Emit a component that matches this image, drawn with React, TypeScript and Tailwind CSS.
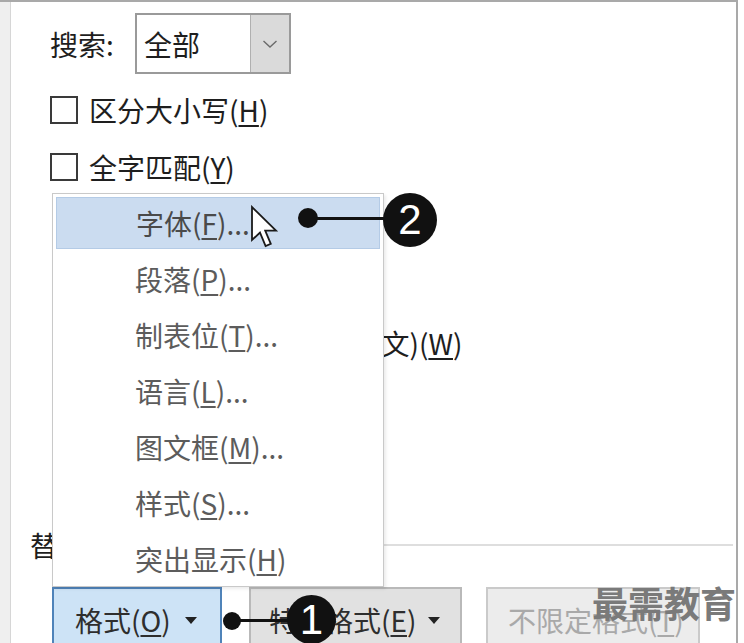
import React from "react";

const U = ({ c }: { c: string }) => <span className="underline underline-offset-[3px] decoration-[1.5px]">{c}</span>;

function Check({ label, k }: { label: string; k: string }) {
  return (
    <div className="flex items-center">
      <div className="w-[28px] h-[28px] border-2 border-[#3a3a3a] bg-white shrink-0" />
      <span className="ml-[11px] text-[#1e1e1e] whitespace-nowrap">
        {label}(<U c={k} />)
      </span>
    </div>
  );
}

function MenuItem({ label, k, dots = true, active = false }: { label: string; k: string; dots?: boolean; active?: boolean }) {
  return (
    <div className="h-[56px] px-[3px] py-[2px]">
      <div
        className={
          "h-full flex items-center pl-[79px] whitespace-nowrap " +
          (active ? "bg-[#cbdcf0] border border-[#b4cbe6] text-[#4a4a4a]" : "text-[#5c5c5c]")
        }
      >
        {label}(<U c={k} />){dots ? "..." : ""}
      </div>
    </div>
  );
}

export default function App() {
  return (
    <div
      className="relative w-[744px] h-[643px] overflow-hidden bg-white text-[28px] leading-none"
      style={{ fontFamily: '"Noto Sans CJK SC", "Microsoft YaHei", sans-serif' }}
    >
      <div className="w-[738px] h-[700px] flex border-t-2 border-r-2 border-[#a9a9a9]">
        <div className="w-[11px] bg-[#efefef] border-r border-[#d6d6d6] shrink-0" />
        <div className="flex-1 flex flex-col pl-[19px]">
          {/* search row */}
          <div className="flex items-center pl-[20px] pt-[11px] h-[72px]">
            <span className="text-[#1e1e1e] w-[85px]">搜索:</span>
            <div className="w-[156px] h-[61px] border-2 border-[#9a9a9a] flex">
              <div className="flex-1 flex items-center pl-[7px] text-[#1e1e1e]">全部</div>
              <div className="w-[39px] bg-[#dadada] border-l border-[#b0b0b0] flex items-center justify-center">
                <svg width="16" height="10" viewBox="0 0 16 10" fill="none">
                  <path d="M1.5 2 L8 8 L14.5 2" stroke="#6a6a6a" strokeWidth="1.4" />
                </svg>
              </div>
            </div>
          </div>
          <div className="pl-[20px] mt-[8px]">
            <div className="h-[56px] flex items-center">
              <Check label="区分大小写" k="H" />
            </div>
            <div className="h-[58px] flex items-center">
              <Check label="全字匹配" k="Y" />
            </div>
            <div className="h-[57px]" />
            <div className="h-[57px]" />
            <div className="h-[66px] flex items-center pl-[3px]">
              <Check label="查找单词的所有形式(英文)" k="W" />
            </div>
          </div>
          {/* replace group */}
          <div className="mt-[157px] h-[24px] flex items-center pr-[3px]">
            <span className="text-[#1e1e1e] whitespace-nowrap">替换</span>
            <div className="flex-1 h-[2px] bg-[#dedede] ml-[8px]" />
          </div>
          {/* buttons */}
          <div className="mt-[30px] ml-[22px] flex items-start">
            <div className="w-[170px] h-[62px] bg-[#cde3f6] border-2 border-[#4f83b9] flex items-center pl-[21px] pt-[4px] text-[#2e2e2e] whitespace-nowrap">
              格式(<U c="O" />)
              <svg className="ml-[14px]" width="12" height="7" viewBox="0 0 12 7">
                <path d="M0 0 H12 L6 7 Z" fill="#222" />
              </svg>
            </div>
            <div className="ml-[27px] w-[213px] h-[62px] bg-[#e1e1e1] border-2 border-[#b9b9b9] flex items-center pl-[18px] pt-[4px] text-[#2e2e2e] whitespace-nowrap">
              特殊格式(<U c="E" />)
              <svg className="ml-[12px]" width="12" height="7" viewBox="0 0 12 7">
                <path d="M0 0 H12 L6 7 Z" fill="#222" />
              </svg>
            </div>
            <div className="ml-[24px] w-[214px] h-[62px] bg-[#ececec] border-2 border-[#cacaca] flex items-center pl-[20px] pt-[4px] text-[#a9a9a9] whitespace-nowrap">
              不限定格式(<U c="T" />)
            </div>
          </div>
        </div>
      </div>

      {/* dropdown menu */}
      <div className="absolute left-[52px] top-[193px] w-[332px] h-[394px] bg-white border border-[#c9c9c9] pt-[1px] shadow-[2px_2px_3px_rgba(0,0,0,0.08)]">
        <MenuItem label="字体" k="F" active />
        <MenuItem label="段落" k="P" />
        <MenuItem label="制表位" k="T" />
        <MenuItem label="语言" k="L" />
        <MenuItem label="图文框" k="M" />
        <MenuItem label="样式" k="S" />
        <MenuItem label="突出显示" k="H" dots={false} />
      </div>

      {/* cursor */}
      <svg className="absolute left-[250px] top-[205px]" width="30" height="44" viewBox="0 0 15 22">
        <path d="M1 1 L1 17.5 L5 13.8 L7.8 20.5 L10.4 19.4 L7.6 12.8 L13 12.8 Z" fill="#fff" stroke="#1a1a1a" strokeWidth="0.9" strokeLinejoin="miter" />
      </svg>

      {/* callout 2 */}
      <div className="absolute left-[298px] top-[208px] w-[20px] h-[20px] rounded-full bg-[#111]" />
      <div className="absolute left-[308px] top-[217px] w-[85px] h-[3px] bg-[#111]" />
      <div
        className="absolute left-[383px] top-[193px] w-[54px] h-[54px] rounded-full bg-[#111] flex items-center justify-center text-white text-[42px]"
        style={{ fontFamily: '"Liberation Sans", Arial, sans-serif' }}
      >
        2
      </div>

      {/* callout 1 */}
      <div className="absolute left-[223px] top-[612px] w-[18px] h-[18px] rounded-full bg-[#111]" />
      <div className="absolute left-[232px] top-[619px] w-[62px] h-[3px] bg-[#111]" />
      <div
        className="absolute left-[287px] top-[595px] w-[49px] h-[49px] rounded-full bg-[#111] flex items-center justify-center text-white text-[42px]"
        style={{ fontFamily: '"Liberation Sans", Arial, sans-serif' }}
      >
        1
      </div>

      {/* watermark */}
      <div className="absolute left-[592px] top-[584px] text-[36px] font-bold text-[#7a7a7a] leading-none whitespace-nowrap">
        最需教育
      </div>
    </div>
  );
}
